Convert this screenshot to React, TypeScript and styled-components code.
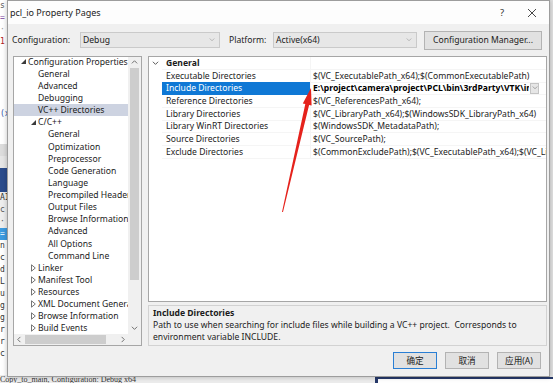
import React from "react";
import styled, { createGlobalStyle } from "styled-components";

const UI = `"Noto Sans", "Noto Sans CJK SC", sans-serif`;

const GlobalStyle = createGlobalStyle`
  html, body { margin: 0; padding: 0; }
  body { width: 553px; height: 383px; overflow: hidden; font-family: ${UI}; }
`;

/* ---------- desktop & background windows ---------- */
const Desktop = styled.div`
  position: relative;
  width: 553px;
  height: 383px;
  overflow: hidden;
  background: #e2e2e2;
`;

const BackWindow = styled.div`
  position: absolute;
  left: 0;
  top: 0;
  width: 380px;
  height: 383px;
  background: #fff;
  display: flex;
  flex-direction: column;
  font-family: "DejaVu Sans Mono", monospace;
  font-size: 8px;
`;

const BackLine = styled.div<{ $color?: string; $bg?: string }>`
  height: 12px;
  line-height: 12px;
  flex: none;
  color: ${(p) => p.$color ?? "#222"};
  background: ${(p) => p.$bg ?? "transparent"};
  white-space: nowrap;
  overflow: hidden;
`;

const StatusLine = styled.div`
  margin-top: auto;
  height: 8px;
  line-height: 10px;
  background: #ececec;
  color: #333;
  font-family: "Liberation Serif", serif;
  font-size: 8px;
  white-space: nowrap;
  overflow: hidden;
`;

const NavyWindow = styled.div`
  position: absolute;
  left: 375px;
  top: 377px;
  width: 200px;
  height: 20px;
  box-sizing: border-box;
  border-left: 3px solid #26396a;
  border-top: 2px solid #26396a;
  background: #fff;
`;

/* ---------- dialog ---------- */
const Dialog = styled.div`
  position: absolute;
  left: 7px;
  top: 0;
  width: 543px;
  height: 377px;
  box-sizing: border-box;
  border: 1px solid #9d9d9d;
  background: #f0f0f0;
  display: flex;
  flex-direction: column;
  font-family: ${UI};
  font-size: 8.6px;
  color: #1b1b1b;
  box-shadow: 0 0 5px rgba(0, 0, 0, 0.25);
`;

const TitleBar = styled.div`
  height: 23px;
  flex: none;
  background: #fdfdfd;
  display: flex;
  align-items: center;
  padding-left: 2px;
  font-size: 9px;
  color: #222;
`;

const TitleText = styled.div`
  flex: 1;
`;

const TitleButton = styled.div`
  width: 30px;
  height: 23px;
  display: flex;
  align-items: center;
  justify-content: center;
  color: #333;
  font-size: 9.5px;
`;

const TitleButtons = styled.div`
  display: flex;
  margin-right: 2px;
`;

const ConfigRow = styled.div`
  height: 32px;
  flex: none;
  display: flex;
  align-items: center;
  padding-left: 4px;
`;

const FieldLabel = styled.div<{ $w: number; $ml?: number }>`
  width: ${(p) => p.$w}px;
  margin-left: ${(p) => p.$ml ?? 0}px;
  flex: none;
  white-space: nowrap;
`;

const Combo = styled.div<{ $w: number }>`
  width: ${(p) => p.$w}px;
  height: 16px;
  box-sizing: border-box;
  border: 1px solid #cacaca;
  background: #e7e7e7;
  display: flex;
  align-items: center;
  padding: 0 4px 0 2px;
  flex: none;
`;

const ComboText = styled.div`
  flex: 1;
`;

const PushButton = styled.div<{ $w: number; $default?: boolean }>`
  width: ${(p) => p.$w}px;
  height: 17px;
  box-sizing: border-box;
  border: 1px solid ${(p) => (p.$default ? "#2a7fd4" : "#b3b3b3")};
  background: #e1e1e1;
  display: flex;
  align-items: center;
  justify-content: center;
  flex: none;
  white-space: nowrap;
`;

const ManagerButton = styled(PushButton)`
  height: 19px;
  margin-left: 7px;
`;

const Main = styled.div`
  height: 290px;
  flex: none;
  display: flex;
  gap: 6px;
  padding: 0 2px 0 5px;
`;

/* ---------- tree ---------- */
const TreePanel = styled.div`
  width: 129px;
  flex: none;
  box-sizing: border-box;
  border: 1px solid #a6a6a6;
  background: #fff;
  display: grid;
  grid-template-columns: 1fr 13px;
  grid-template-rows: 1fr 11px;
`;

const TreeList = styled.div`
  overflow: hidden;
  position: relative;
`;

const TreeInner = styled.div`
  margin-top: -1.4px;
`;

const TreeRow = styled.div<{ $indent: number; $selected?: boolean }>`
  height: 12.13px;
  display: flex;
  align-items: center;
  padding-left: ${(p) => p.$indent}px;
  background: ${(p) => (p.$selected ? "#cdd3e1" : "transparent")};
  white-space: nowrap;
`;

const TreeIcon = styled.div`
  width: 7px;
  flex: none;
  display: flex;
  align-items: center;
`;

const VScroll = styled.div`
  background: #f0f0f0;
  display: flex;
  flex-direction: column;
  align-items: center;
`;

const ScrollArrow = styled.div<{ $size?: number }>`
  width: 11px;
  height: 11px;
  flex: none;
  display: flex;
  align-items: center;
  justify-content: center;
`;

const VThumb = styled.div`
  width: 9px;
  height: 212px;
  background: #cdcdcd;
  flex: none;
`;

const Spacer = styled.div`
  flex: 1;
`;

const HScroll = styled.div`
  background: #f0f0f0;
  display: flex;
  align-items: center;
`;

const HThumb = styled.div`
  width: 81px;
  height: 9px;
  background: #cdcdcd;
  flex: none;
`;

const Corner = styled.div`
  background: #f0f0f0;
`;

/* ---------- property grid ---------- */
const RightPane = styled.div`
  flex: 1;
  display: flex;
  flex-direction: column;
  gap: 3px;
  min-width: 0;
`;

const GridPanel = styled.div`
  height: 246px;
  flex: none;
  box-sizing: border-box;
  border: 1px solid #a6a6a6;
  background: #fff;
  overflow: hidden;
`;

const GridRow = styled.div`
  display: grid;
  grid-template-columns: 13px 148px 1fr;
  height: 12.7px;
`;

const Gutter = styled.div`
  display: flex;
  align-items: center;
  justify-content: center;
`;

const NameCell = styled.div<{ $selected?: boolean; $bold?: boolean }>`
  display: flex;
  align-items: center;
  padding-left: 4px;
  box-sizing: border-box;
  background: ${(p) => (p.$selected ? "#0f78d5" : "transparent")};
  color: ${(p) => (p.$selected ? "#fff" : "#1b1b1b")};
  font-weight: ${(p) => (p.$bold ? 700 : 400)};
  white-space: nowrap;
  overflow: hidden;
  border-bottom: 1px solid ${(p) => (p.$selected ? "#0f78d5" : "#f5f5f5")};
`;

const ValueCell = styled.div<{ $bold?: boolean }>`
  display: flex;
  align-items: center;
  padding-left: 2px;
  min-width: 0;
  box-sizing: border-box;
  font-weight: ${(p) => (p.$bold ? 700 : 400)};
  color: ${(p) => (p.$bold ? "#000" : "#1b1b1b")};
  border-bottom: 1px solid #f5f5f5;
  border-left: 1px solid #f5f5f5;
`;

const ValueText = styled.div`
  flex: 1;
  min-width: 0;
  overflow: hidden;
  white-space: nowrap;
`;

const DropButton = styled.div`
  width: 9px;
  height: 11px;
  flex: none;
  box-sizing: border-box;
  border: 1px solid #c4c4c4;
  background: #e6e6e6;
  display: flex;
  align-items: center;
  justify-content: center;
  margin: 0 7px 0 1px;
`;

const DescPanel = styled.div`
  height: 41px;
  flex: none;
  box-sizing: border-box;
  border: 1px solid #d2d2d2;
  background: #f0f0f0;
  padding: 1px 4px;
  line-height: 12px;
`;

const DescTitle = styled.div`
  font-weight: 700;
`;

const DescText = styled.div`
  white-space: pre;
`;

const Footer = styled.div`
  flex: 1;
  display: flex;
  justify-content: flex-end;
  align-items: flex-start;
  gap: 8px;
  padding: 6px 8px 0 0;
`;

const ArrowOverlay = styled.svg`
  position: absolute;
  left: 275px;
  top: 85px;
  width: 45px;
  height: 135px;
  pointer-events: none;
`;

/* ---------- icons ---------- */
const Expanded = () => (
  <svg width="5" height="5" viewBox="0 0 5 5">
    <path d="M5 0V5H0Z" fill="#3a3a3a" />
  </svg>
);
const Collapsed = () => (
  <svg width="5" height="8" viewBox="0 0 5 8">
    <path d="M0.5 0.8L4.3 4L0.5 7.2Z" fill="none" stroke="#666" strokeWidth="0.9" />
  </svg>
);
const Chevron = ({ dir, color = "#606060", w = 7 }: { dir: "up" | "down" | "left" | "right"; color?: string; w?: number }) => {
  const paths: Record<string, string> = {
    down: "M1 2L4 5L7 2",
    up: "M1 5L4 2L7 5",
    left: "M5 1L2 4L5 7",
    right: "M3 1L6 4L3 7",
  };
  return (
    <svg width={w} height={w} viewBox="0 0 8 8">
      <path d={paths[dir]} fill="none" stroke={color} strokeWidth="1" />
    </svg>
  );
};
const CloseIcon = () => (
  <svg width="10" height="10" viewBox="0 0 10 10">
    <path d="M1 1L9 9M9 1L1 9" stroke="#333" strokeWidth="0.9" />
  </svg>
);

/* ---------- data ---------- */
type TreeItem = { label: string; level: 0 | 1 | 2; icon?: "open" | "closed"; selected?: boolean };
const treeItems: TreeItem[] = [
  { label: "Configuration Properties", level: 0, icon: "open" },
  { label: "General", level: 1 },
  { label: "Advanced", level: 1 },
  { label: "Debugging", level: 1 },
  { label: "VC++ Directories", level: 1, selected: true },
  { label: "C/C++", level: 1, icon: "open" },
  { label: "General", level: 2 },
  { label: "Optimization", level: 2 },
  { label: "Preprocessor", level: 2 },
  { label: "Code Generation", level: 2 },
  { label: "Language", level: 2 },
  { label: "Precompiled Headers", level: 2 },
  { label: "Output Files", level: 2 },
  { label: "Browse Information", level: 2 },
  { label: "Advanced", level: 2 },
  { label: "All Options", level: 2 },
  { label: "Command Line", level: 2 },
  { label: "Linker", level: 1, icon: "closed" },
  { label: "Manifest Tool", level: 1, icon: "closed" },
  { label: "Resources", level: 1, icon: "closed" },
  { label: "XML Document Generator", level: 1, icon: "closed" },
  { label: "Browse Information", level: 1, icon: "closed" },
  { label: "Build Events", level: 1, icon: "closed" },
];

type Prop = { name: string; value: string; selected?: boolean };
const props: Prop[] = [
  { name: "Executable Directories", value: "$(VC_ExecutablePath_x64);$(CommonExecutablePath)" },
  { name: "Include Directories", value: "E:\\project\\camera\\project\\PCL\\bin\\3rdParty\\VTK\\include\\vtk-8.1", selected: true },
  { name: "Reference Directories", value: "$(VC_ReferencesPath_x64);" },
  { name: "Library Directories", value: "$(VC_LibraryPath_x64);$(WindowsSDK_LibraryPath_x64)" },
  { name: "Library WinRT Directories", value: "$(WindowsSDK_MetadataPath);" },
  { name: "Source Directories", value: "$(VC_SourcePath);" },
  { name: "Exclude Directories", value: "$(CommonExcludePath);$(VC_ExecutablePath_x64);$(VC_LibraryPath_x64)" },
];

type Back = { t: string; c?: string; bg?: string };
const backLines: Back[] = [
  { t: "s", c: "#555" },
  { t: "=", c: "#7b3fa0" },
  { t: "·", c: "#999" },
  { t: "1", c: "#b02020" },
  { t: "" },
  { t: "" },
  { t: "" },
  { t: "" },
  { t: "" },
  { t: "(x", c: "#2a4fa8" },
  { t: "" },
  { t: "" },
  { t: "", bg: "#dcdcdc" },
  { t: "", bg: "#e6e6e6" },
  { t: "", bg: "#2b4c8c" },
  { t: "", bg: "#2b4c8c" },
  { t: "AI", c: "#333", bg: "#eeeeee" },
  { t: "c", c: "#555", bg: "#eeeeee" },
  { t: "·", c: "#555", bg: "#eeeeee" },
  { t: "=", c: "#fff", bg: "#3d9be0" },
  { t: "n", c: "#333" },
  { t: "c", c: "#333" },
  { t: "d", c: "#333" },
  { t: "L", c: "#333" },
  { t: "u", c: "#333" },
  { t: "g", c: "#333" },
  { t: "g", c: "#333" },
  { t: "r", c: "#333" },
  { t: "r", c: "#333" },
  { t: "c", c: "#333" },
];

export default function App() {
  return (
    <>
      <GlobalStyle />
      <Desktop>
        <BackWindow>
          {backLines.map((l, i) => (
            <BackLine key={i} $color={l.c} $bg={l.bg}>
              {l.t}
            </BackLine>
          ))}
          <StatusLine>Copy_to_main, Configuration: Debug x64</StatusLine>
        </BackWindow>
        <NavyWindow />

        <Dialog>
          <TitleBar>
            <TitleText>pcl_io Property Pages</TitleText>
            <TitleButtons>
              <TitleButton>?</TitleButton>
              <TitleButton>
                <CloseIcon />
              </TitleButton>
            </TitleButtons>
          </TitleBar>

          <ConfigRow>
            <FieldLabel $w={68}>Configuration:</FieldLabel>
            <Combo $w={140}>
              <ComboText>Debug</ComboText>
              <Chevron dir="down" color="#a5a5a5" w={6} />
            </Combo>
            <FieldLabel $w={44} $ml={9}>
              Platform:
            </FieldLabel>
            <Combo $w={144}>
              <ComboText>Active(x64)</ComboText>
              <Chevron dir="down" color="#a5a5a5" w={6} />
            </Combo>
            <ManagerButton $w={118}>Configuration Manager...</ManagerButton>
          </ConfigRow>

          <Main>
            <TreePanel>
              <TreeList>
                <TreeInner>
                  {treeItems.map((it, i) => (
                    <TreeRow key={i} $indent={7 + it.level * 10} $selected={it.selected}>
                      {it.icon ? (
                        <TreeIcon>{it.icon === "open" ? <Expanded /> : <Collapsed />}</TreeIcon>
                      ) : (
                        <TreeIcon />
                      )}
                      {it.label}
                    </TreeRow>
                  ))}
                </TreeInner>
              </TreeList>
              <VScroll>
                <ScrollArrow>
                  <Chevron dir="up" />
                </ScrollArrow>
                <VThumb />
                <Spacer />
                <ScrollArrow>
                  <Chevron dir="down" />
                </ScrollArrow>
              </VScroll>
              <HScroll>
                <ScrollArrow>
                  <Chevron dir="left" />
                </ScrollArrow>
                <HThumb />
                <Spacer />
                <ScrollArrow>
                  <Chevron dir="right" />
                </ScrollArrow>
              </HScroll>
              <Corner />
            </TreePanel>

            <RightPane>
              <GridPanel>
                <GridRow>
                  <Gutter>
                    <Chevron dir="down" color="#444" w={7} />
                  </Gutter>
                  <NameCell $bold>General</NameCell>
                  <ValueCell />
                </GridRow>
                {props.map((p) => (
                  <GridRow key={p.name}>
                    <Gutter />
                    <NameCell $selected={p.selected}>{p.name}</NameCell>
                    <ValueCell $bold={p.selected}>
                      <ValueText>{p.value}</ValueText>
                      {p.selected && (
                        <DropButton>
                          <Chevron dir="down" color="#8a8a8a" w={6} />
                        </DropButton>
                      )}
                    </ValueCell>
                  </GridRow>
                ))}
              </GridPanel>
              <DescPanel>
                <DescTitle>Include Directories</DescTitle>
                <DescText>
                  {"Path to use when searching for include files while building a VC++ project.  Corresponds to\nenvironment variable INCLUDE."}
                </DescText>
              </DescPanel>
            </RightPane>
          </Main>

          <Footer>
            <PushButton $w={44} $default>
              确定
            </PushButton>
            <PushButton $w={44}>取消</PushButton>
            <PushButton $w={44}>应用(A)</PushButton>
          </Footer>
        </Dialog>

        <ArrowOverlay viewBox="0 0 45 135">
          <polygon
            points="36,3 36.6,20.6 34.1,20.1 8,127.1 7,126.9 30.3,19.1 27.8,18.6"
            fill="#e5221c"
          />
        </ArrowOverlay>
      </Desktop>
    </>
  );
}
